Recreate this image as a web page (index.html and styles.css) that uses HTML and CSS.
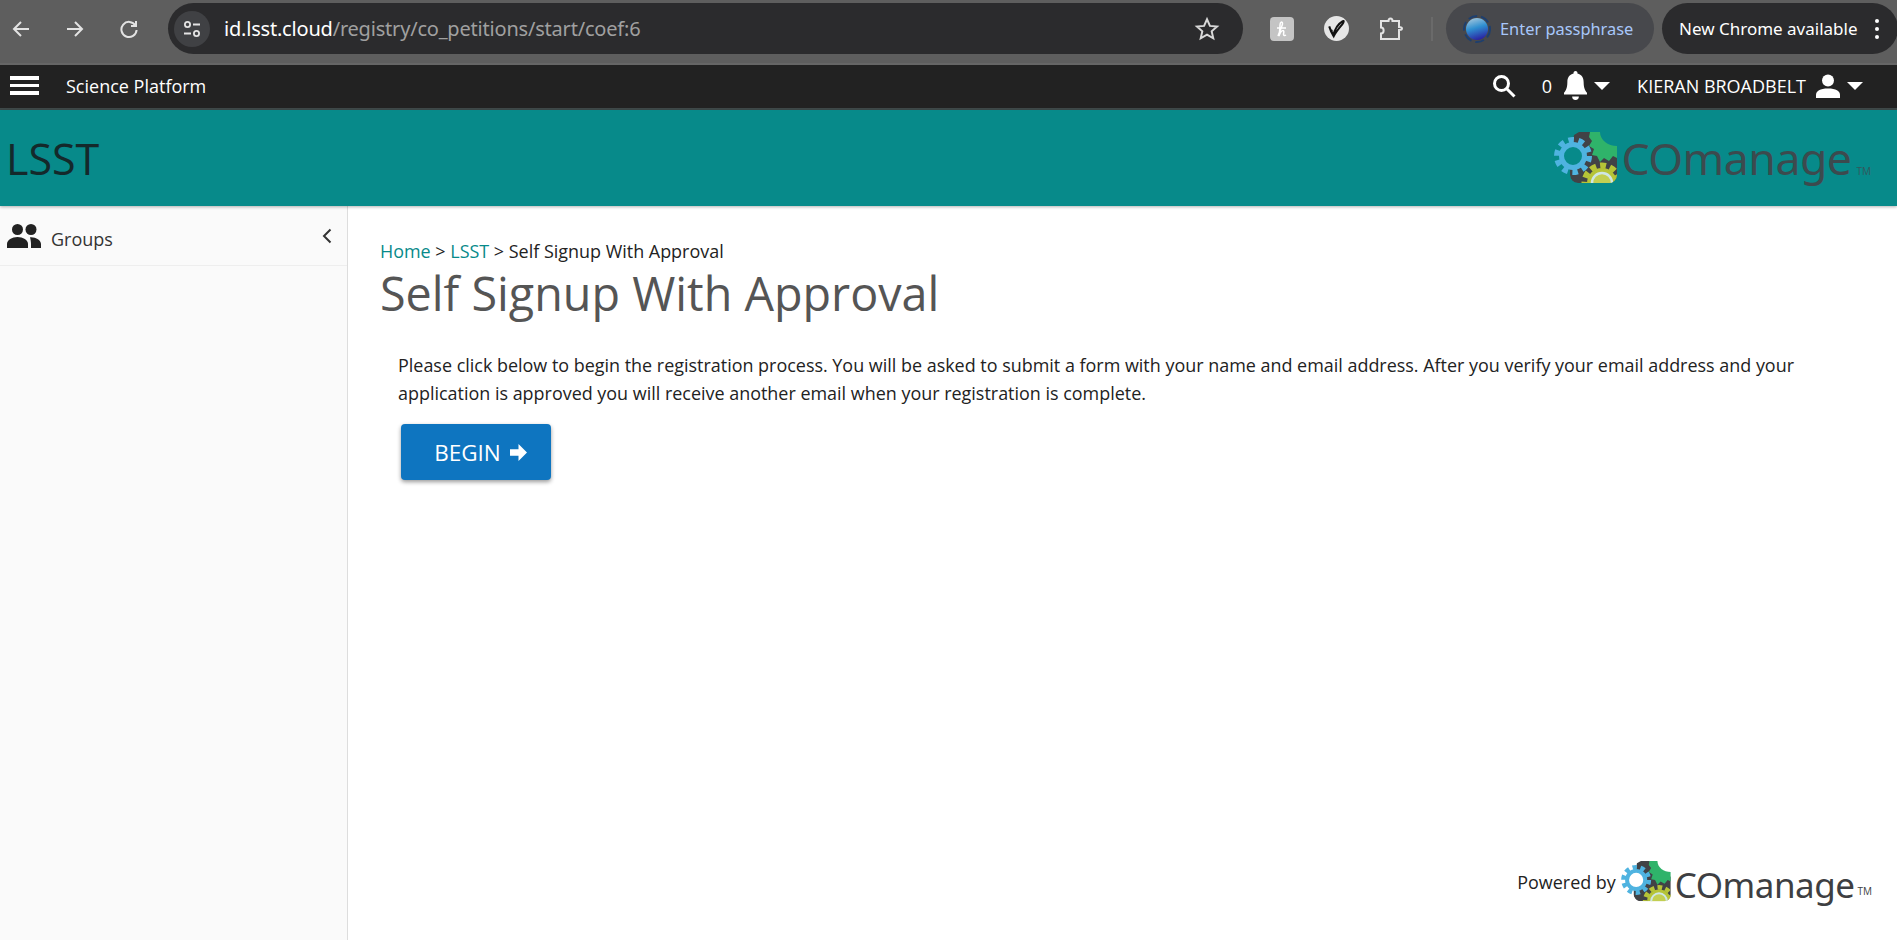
FILE: index.html
```html
<!DOCTYPE html>
<html lang="en">
<head>
<meta charset="utf-8">
<title>Self Signup With Approval</title>
<link rel="stylesheet" href="styles.css">
</head>
<body>
<svg class="defs" width="0" height="0" aria-hidden="true">
  <defs>
    <clipPath id="logo-clip"><path d="M0 0H63V43a8 8 0 0 1-8 8H24a8 8 0 0 1-8-8V44H0z"/></clipPath>
    <linearGradient id="globe-fill" x1="0.3" y1="0" x2="0.6" y2="1">
      <stop offset="0" stop-color="#9fc4dc"/>
      <stop offset="0.45" stop-color="#2f8fd0"/>
      <stop offset="1" stop-color="#2a1fa0"/>
    </linearGradient>
    <symbol id="cog" viewBox="0 0 63 52">
      <g clip-path="url(#logo-clip)">
        <path fill="#414246" d="M20 3L25 0H36L41 10L63 20V43a8 8 0 0 1-8 8H24a8 8 0 0 1-8-8V30z"/>
        <path fill="#2fb36a" d="M36 0H46C46 8 54 14 63 14V26L59 24 55 29 50 26 46 30 43 24 38 23 40 17 35 14 38 9 35 5z"/>
        <circle cx="48" cy="51" r="15" fill="#b6c437"/>
        <circle cx="48" cy="51" r="17.500" fill="none" stroke="#b6c437" stroke-width="6" stroke-dasharray="6 4"/>
        <circle cx="48" cy="51" r="10" fill="#c3cf52" stroke="#cfe6e4" stroke-width="2.500"/>
      </g>
      <circle cx="19" cy="24" r="10" fill="currentColor"/>
      <circle cx="19" cy="24" r="11.500" fill="none" stroke="#4fb3e0" stroke-width="5"/>
      <circle cx="19" cy="24" r="16" fill="none" stroke="#4fb3e0" stroke-width="6" stroke-dasharray="5.500 4.550"/>
    </symbol>
  </defs>
</svg>

<div class="browser">
  <svg class="b-ico" viewBox="0 0 20 20"><path d="M18 10H3M10 3l-7 7 7 7"/></svg>
  <svg class="b-ico fwd" viewBox="0 0 20 20"><path d="M2 10h15M10 3l7 7-7 7"/></svg>
  <svg class="b-ico reload" viewBox="0 0 20 20"><path d="M16.500 6.500A7.600 7.600 0 1 0 17.600 11M17 2v5h-5"/></svg>
  <div class="omnibox">
    <span class="tune"><svg viewBox="0 0 20 20"><circle cx="5.500" cy="5.500" r="2.600"/><path d="M11 5.500h7M2 14.500h7"/><circle cx="14.500" cy="14.500" r="2.600"/></svg></span>
    <span class="url"><b>id.lsst.cloud</b>/registry/co_petitions/start/coef:6</span>
    <svg class="star" viewBox="0 0 24 24"><path d="M12 3l2.700 6.100 6.600.6-5 4.400 1.500 6.500L12 17.200l-5.800 3.400 1.500-6.500-5-4.400 6.600-.6z"/></svg>
  </div>
  <div class="exts">
    <span class="ext-h"><svg viewBox="0 0 24 24"><path d="M8 19C10 13 12.500 9 12.500 6.500S10 5 10 8 9.500 15 9 19c1-3 2.500-5.500 4-5.500s.500 3 .500 4 1 1.500 2.500.500M7 11h9"/></svg></span>
    <span class="ext-v"><svg viewBox="0 0 24 24"><path d="M5 10c1 3 2 6 4 9 1-5 4-11 9-14 1.500-1 1 1-.500 3-3 3.500-6 7-8 11-1.500-2-3-4-2-6"/></svg></span>
    <svg class="puzzle" viewBox="0 0 24 25"><path d="M2 5h7.500c0-3.500 4-3.500 4 0H20v6c2 0 3 .800 3 1.500S22 14 20 14v9H2v-5.500c3.500 0 3.500-6 0-6z"/></svg>
  </div>
  <span class="sep"></span>
  <div class="pill pass">
    <svg class="globe" viewBox="0 0 28 28"><circle cx="14" cy="14" r="13" class="globe-ring"/><circle cx="14" cy="14" r="11" class="globe-ball"/></svg>
    <span>Enter passphrase</span>
  </div>
  <div class="pill update"><span>New Chrome available</span><span class="dots"><i></i><i></i><i></i></span></div>
</div>

<nav class="topnav">
  <div class="burger"><i></i><i></i><i></i></div>
  <span class="platform">Science Platform</span>
  <svg class="search" viewBox="0 0 24 24"><circle cx="9.500" cy="9.500" r="7"/><path d="M15 15l7.500 7.500"/></svg>
  <span class="count">0</span>
  <svg class="bell" viewBox="0 0 24 30"><path d="M12 0a2 2 0 0 1 2 2.500c4.500 1 6.500 4.500 6.500 9 0 6 1.500 8.500 3.500 11v2H0v-2c2-2.500 3.500-5 3.500-11 0-4.500 2-8 6.500-9A2 2 0 0 1 12 0zM8.500 26.500h7a3.500 3.500 0 0 1-7 0z"/></svg>
  <span class="caret bell-caret"></span>
  <span class="user">KIERAN BROADBELT</span>
  <svg class="person" viewBox="0 0 24 24"><circle cx="12" cy="6.500" r="6"/><path d="M0 24v-3c0-4 4-6.500 12-6.500S24 17 24 21v3z"/></svg>
  <span class="caret"></span>
</nav>

<header class="banner">
  <h1 class="co-name">LSST</h1>
  <div class="logo logo-head">
    <svg class="logo-cog"><use href="#cog"/></svg>
    <span class="logo-text">COmanage</span>
    <span class="tm">TM</span>
  </div>
</header>

<div class="layout">
  <aside class="sidebar">
    <div class="side-row">
      <svg class="groups" viewBox="0 0 34 24"><circle cx="10.500" cy="5.500" r="5.500"/><circle cx="24" cy="5.500" r="5.500"/><path d="M0 24v-4c0-4 5-7 10.500-7S21 16 21 20v4z"/><path d="M23 13.200c5.500-.5 11 2.800 11 6.800v4H24v-4c0-2.500-.5-4.800-1-6.800z"/></svg>
      <span class="side-label">Groups</span>
      <svg class="chev" viewBox="0 0 10 16"><path d="M8.500 1.500L2 8l6.500 6.500"/></svg>
    </div>
  </aside>
  <main class="content">
    <div class="crumbs"><a href="#">Home</a> &gt; <a href="#">LSST</a> &gt; Self Signup With Approval</div>
    <h2 class="title">Self Signup With Approval</h2>
    <p class="intro">Please click below to begin the registration process. You will be asked to submit a form with your name and email address. After you verify your email address and your application is approved you will receive another email when your registration is complete.</p>
    <a class="begin" href="#">BEGIN
      <svg viewBox="0 0 18 18"><path d="M0 5.500h9V0l9 9-9 9v-5.500H0z"/></svg>
    </a>
    <footer class="powered">
      <span>Powered by</span>
      <div class="logo logo-foot">
        <svg class="logo-cog"><use href="#cog"/></svg>
        <span class="logo-text">COmanage</span>
        <span class="tm">TM</span>
      </div>
    </footer>
  </main>
</div>
</body>
</html>
```

FILE: styles.css
```css
* { box-sizing: border-box; }
html, body { height: 100%; }
body {
  margin: 0;
  height: 940px;
  overflow: hidden;
  display: flex;
  flex-direction: column;
  font-family: "Open Sans", sans-serif;
  color: #222;
  background: #fff;
}
.defs { position: absolute; }

/* browser chrome */
.browser {
  height: 65px;
  flex: none;
  display: flex;
  align-items: flex-start;
  padding: 3px 0 0 11px;
  background: #5e5e5e;
  border-bottom: 2px solid #666;
  font-family: "Noto Sans", sans-serif;
}
.b-ico {
  width: 20px;
  height: 20px;
  margin: 16px 34px 0 0;
  fill: none;
  stroke: #e3e3e3;
  stroke-width: 2;
  flex: none;
}
.b-ico.reload { margin-right: 29px; }
.omnibox {
  width: 1075px;
  height: 51px;
  flex: none;
  display: flex;
  align-items: center;
  padding: 0 23px 0 6px;
  background: #2b2b2d;
  border-radius: 26px;
}
.tune {
  width: 36px;
  height: 36px;
  flex: none;
  display: flex;
  align-items: center;
  justify-content: center;
  border-radius: 50%;
  background: #404144;
}
.tune svg { width: 20px; height: 20px; fill: none; stroke: #e3e3e3; stroke-width: 1.800; }
.url {
  margin-left: 14px;
  flex: 1;
  font-size: 20px;
  letter-spacing: -0.2px;
  color: #a0a0a0;
}
.url b { font-weight: 400; color: #fff; }
.star { width: 26px; height: 26px; fill: none; stroke: #d8d8d8; stroke-width: 1.800; }
.exts { display: flex; align-items: center; height: 51px; margin-left: 27px; flex: none; }
.ext-h {
  width: 24px;
  height: 24px;
  border-radius: 4px;
  background: #c4c4c4;
}
.ext-h svg { display: block; width: 24px; height: 24px; fill: none; stroke: #fff; stroke-width: 1.500; }
.ext-v {
  width: 25px;
  height: 25px;
  margin-left: 30px;
  border-radius: 50%;
  background: #e6e6e6;
}
.ext-v svg { display: block; width: 25px; height: 25px; fill: none; stroke: #111; stroke-width: 2; }
.puzzle { width: 24px; height: 25px; margin-left: 30px; fill: none; stroke: #e3e3e3; stroke-width: 2; }
.sep { width: 2px; height: 24px; margin: 14px 13px 0 28px; background: #6a6a6a; flex: none; }
.pill {
  height: 51px;
  flex: none;
  display: flex;
  align-items: center;
  border-radius: 26px;
  font-size: 17px;
}
.pass { width: 208px; padding-left: 17px; background: #47484c; color: #a8c7fa; font-size: 16.400px; }
.globe { width: 28px; height: 28px; margin-right: 9px; flex: none; }
.globe-ring { fill: none; stroke: #1e3f6e; stroke-width: 2; stroke-dasharray: 9 4; }
.globe-ball { fill: url(#globe-fill); }
.update {
  width: 236px;
  margin-left: 8px;
  padding-left: 17px;
  background: #2b2b2d;
  color: #fff;
  border-radius: 26px;
}
.dots { display: flex; flex-direction: column; gap: 4px; margin-left: 17px; }
.dots i { width: 4px; height: 4px; border-radius: 50%; background: #fff; }

/* app navigation */
.topnav {
  height: 45px;
  flex: none;
  display: flex;
  align-items: center;
  padding: 0 34px 2px 10px;
  background: #222;
  border-bottom: 2px solid #3f4a4a;
  color: #fff;
  font-size: 18px;
}
.burger { display: flex; flex-direction: column; gap: 4px; width: 29px; }
.burger i { height: 3.500px; background: #fff; }
.platform { margin-left: 27px; flex: 1; }
.search { width: 24px; height: 24px; fill: none; stroke: #fff; stroke-width: 3; }
.count { margin-left: 26px; }
.bell { width: 23px; height: 29px; margin-left: 12px; fill: #fff; }
.caret {
  width: 0;
  height: 0;
  margin-left: 7px;
  border-left: 8px solid transparent;
  border-right: 8px solid transparent;
  border-top: 8px solid #fff;
}
.user { margin-left: 27px; }
.person { width: 24px; height: 24px; margin-left: 10px; fill: #fff; }

/* banner */
.banner {
  height: 96px;
  flex: none;
  display: flex;
  align-items: center;
  justify-content: space-between;
  padding: 0 26px 0 6px;
  background: #078a8a;
  box-shadow: 0 1px 3px rgba(0, 0, 0, .3);
  position: relative;
}
.co-name { margin: 0; font-size: 43px; font-weight: 400; color: #14292b; }
.logo { display: flex; align-items: center; }
.logo-cog { flex: none; }
.logo-text { font-family: "Noto Sans", sans-serif; letter-spacing: -0.5px; }
.tm { font-size: 10px; align-self: flex-end; }
.logo-head { color: #3c4a4e; }
.logo-head .logo-cog { width: 63px; height: 52px; margin-right: 5px; color: #078a8a; }
.logo-head .logo-text { font-size: 44.600px; line-height: 52px; }
.logo-head .tm { margin: 0 0 6px 5px; color: #33585a; }

/* page body */
.layout { flex: 1; display: flex; min-height: 0; }
.sidebar {
  width: 348px;
  flex: none;
  background: #fafafa;
  border-right: 1px solid #ddd;
}
.side-row {
  height: 60px;
  display: flex;
  align-items: center;
  padding: 6px 15px 0 7px;
  border-bottom: 1px solid #eee;
}
.groups { width: 34px; height: 24px; fill: #222; margin-top: -5px; }
.side-label { margin-left: 10px; flex: 1; font-size: 18px; color: #333; }
.chev { width: 10px; height: 16px; margin-top: -5px; fill: none; stroke: #333; stroke-width: 2; }

.content {
  flex: 1;
  display: flex;
  flex-direction: column;
  align-items: flex-start;
  padding: 34px 32px 0;
  min-width: 0;
}
.crumbs { font-size: 17.950px; line-height: 22px; color: #222; }
.crumbs a { color: #078a8a; text-decoration: none; }
.title { margin: 0; font-size: 46.700px; line-height: 62px; font-weight: 400; color: #555; }
.intro {
  margin: 27px 0 0;
  padding-left: 18px;
  max-width: 1460px;
  font-size: 17.950px;
  line-height: 28px;
  color: #222;
}
.begin {
  margin: 17px 0 0 21px;
  width: 150px;
  height: 56px;
  padding-left: 9px;
  display: flex;
  align-items: center;
  justify-content: center;
  gap: 9px;
  border-radius: 4px;
  background: #0e75c0;
  box-shadow: 0 2px 4px rgba(0, 0, 0, .4);
  color: #fff;
  font-size: 22.500px;
  text-decoration: none;
}
.begin svg { width: 17px; height: 17px; fill: #fff; }
.powered {
  margin-top: auto;
  margin-bottom: 38px;
  align-self: flex-end;
  display: flex;
  align-items: center;
  gap: 5px;
  font-size: 17.950px;
  margin-right: -7px;
}
.logo-foot { color: #3e3f42; }
.logo-foot .logo-cog { width: 50px; height: 41px; margin-right: 4px; color: #fff; }
.logo-foot .logo-text { font-size: 35px; line-height: 47px; margin-bottom: -6px; }
.logo-foot .tm { margin: 0 0 4px 3px; font-size: 10px; }
```
